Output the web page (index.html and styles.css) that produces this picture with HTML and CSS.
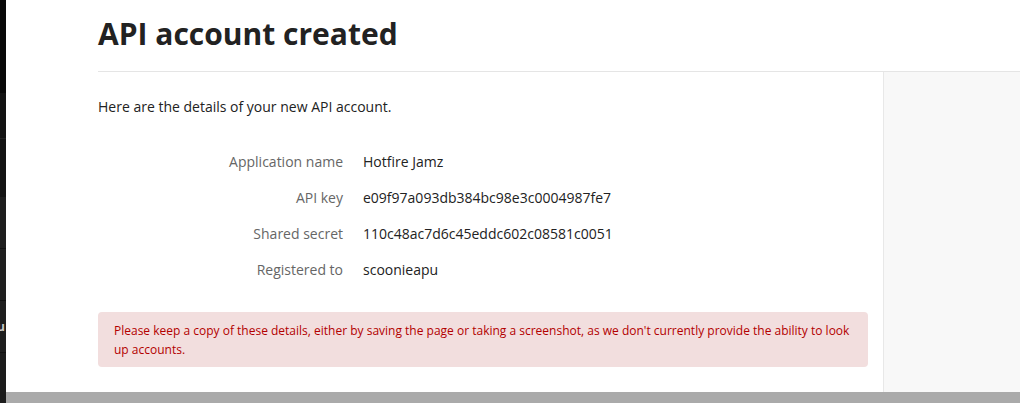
FILE: index.html
```html
<!DOCTYPE html>
<html lang="en">
<head>
<meta charset="utf-8">
<title>API account created</title>
<link rel="stylesheet" href="styles.css">
</head>
<body>
<div class="page">
  <nav class="strip">
    <div class="seg s1"></div>
    <div class="seg s2"></div>
    <div class="seg s3"></div>
    <div class="seg s4"></div>
    <div class="seg s5"></div>
    <div class="seg s6"><span class="seg-label">Menu</span></div>
    <div class="seg s7"></div>
  </nav>
  <div class="main">
    <div class="wrap">
      <header class="head">
        <h1 class="title">API account created</h1>
      </header>
      <div class="row">
        <section class="content">
          <p class="intro">Here are the details of your new API account.</p>
          <dl class="details">
            <dt>Application name</dt><dd>Hotfire Jamz</dd>
            <dt>API key</dt><dd>e09f97a093db384bc98e3c0004987fe7</dd>
            <dt>Shared secret</dt><dd>110c48ac7d6c45eddc602c08581c0051</dd>
            <dt>Registered to</dt><dd>scoonieapu</dd>
          </dl>
          <div class="alert">Please keep a copy of these details, either by saving the page or taking a screenshot, as we don't currently provide the ability to look up accounts.</div>
        </section>
        <aside class="side"></aside>
      </div>
    </div>
    <div class="footbar"></div>
  </div>
</div>
</body>
</html>
```

FILE: styles.css
```css
* { box-sizing: border-box; }
html, body { margin: 0; padding: 0; }
body {
  font-family: "Open Sans", "Liberation Sans", sans-serif;
  color: #222;
  background: #fff;
}
.page {
  display: flex;
  width: 1020px;
  height: 403px;
  overflow: hidden;
}
.strip {
  width: 6px;
  flex: none;
  display: flex;
  flex-direction: column;
  background: #1c1c1c;
}
.seg { flex: none; }
.s1 { height: 93px; background: #080808; }
.s2 { height: 46px; background: #131313; border-bottom: 1px solid #232323; }
.s3 { height: 58px; background: #141414; }
.s4 { height: 52px; background: #1e1e1e; border-bottom: 1px solid #111; }
.s5 { height: 52px; background: #1f1f1f; border-bottom: 1px solid #0f0f0f; }
.s6 {
  height: 52px;
  background: #1e1e1e;
  border-bottom: 1px solid #111;
  display: flex;
  justify-content: flex-end;
  align-items: center;
  overflow: hidden;
}
.seg-label {
  font-size: 12px;
  font-weight: 700;
  color: #c8c8c8;
  white-space: nowrap;
  margin-right: 1px;
}
.s7 { flex: 1; background: #1c1c1c; }

.main {
  flex: 1;
  display: flex;
  flex-direction: column;
}
.wrap {
  flex: 1;
  margin-left: 92px;
  display: flex;
  flex-direction: column;
}
.head {
  padding: 14px 0 17px;
  border-bottom: 1px solid #e5e5e5;
}
.title {
  margin: 0;
  font-size: 30px;
  line-height: 40px;
  font-weight: 700;
  color: #222;
}
.row {
  flex: 1;
  display: flex;
}
.content {
  flex: 1;
  padding-right: 15px;
}
.intro {
  margin: 25px 0 0;
  font-size: 14px;
  line-height: 20px;
}
.details {
  margin: 27px 0 0;
  display: grid;
  grid-template-columns: 245px 1fr;
  column-gap: 20px;
  font-size: 14px;
  line-height: 20px;
}
.details dt {
  text-align: right;
  color: #666;
  padding: 8px 0;
}
.details dd {
  margin: 0;
  padding: 8px 0;
  color: #222;
}
.alert {
  margin-top: 24px;
  background: #f2dede;
  color: #b30000;
  border-radius: 4px;
  padding: 9px 16px 8px;
  font-size: 12px;
  line-height: 19px;
}
.side {
  width: 137px;
  flex: none;
  background: #f8f8f8;
  border-left: 1px solid #e8e8e8;
}
.footbar {
  height: 11px;
  flex: none;
  background: #aaaaaa;
}
```
